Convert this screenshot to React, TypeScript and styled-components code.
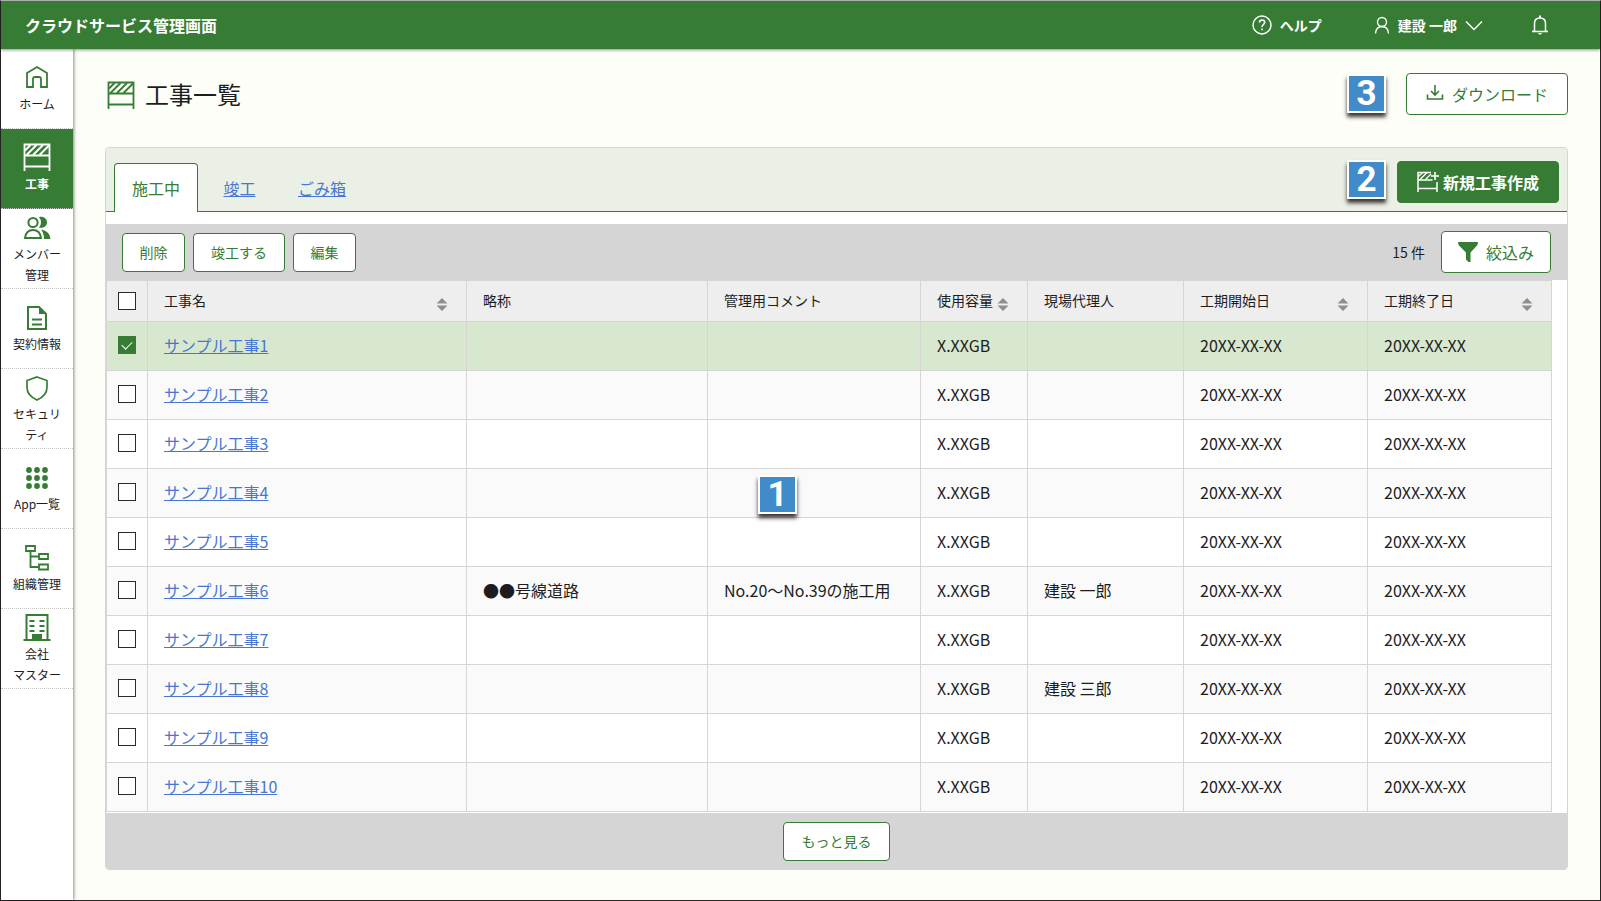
import React from 'react';
import styled, { createGlobalStyle, css } from 'styled-components';

const green = '#377c35';
const line = '#d5d5d5';
const linkBlue = '#4876d0';
const ink = '#1d1d1f';

const GlobalStyle = createGlobalStyle`
  *, *::before, *::after { box-sizing: border-box; }
  body {
    margin: 0;
    color: ${ink};
    font-family: "Noto Sans CJK JP", "Noto Sans", sans-serif;
    font-size: 16px;
    line-height: 24px;
  }
  button, input { font: inherit; color: inherit; }
`;

const Page = styled.div`
  display: flex;
  flex-direction: column;
  min-height: 100vh;
  background: #fdfef7;
  border: 1px solid #2a2527;
  border-top-color: #bdbdbd;
`;

const Header = styled.header`
  position: relative;
  z-index: 2;
  display: flex;
  align-items: center;
  justify-content: space-between;
  height: 48px;
  padding: 0 51px 0 24px;
  background: ${green};
  color: #fff;
  box-shadow: 0 1px 3px rgba(0, 0, 0, 0.45);
`;

const ServiceName = styled.div`
  font-weight: 700;
`;

const HeaderActions = styled.div`
  display: flex;
  align-items: center;
  gap: 48px;
`;

const HeaderButton = styled.button`
  display: flex;
  align-items: center;
  gap: 8px;
  padding: 0;
  border: 0;
  background: none;
  font-size: 14px;
  font-weight: 700;
  cursor: pointer;
  &:first-child { margin-right: 4px; }
`;

const Body = styled.div`
  display: flex;
  flex: 1;
`;

const Sidebar = styled.nav`
  position: relative;
  z-index: 1;
  flex: none;
  width: 72px;
  background: #fff;
  box-shadow: 1px 0 3px rgba(0, 0, 0, 0.45);
`;

const NavItem = styled.a<{ $active?: boolean }>`
  display: flex;
  flex-direction: column;
  align-items: center;
  justify-content: center;
  gap: 2px;
  height: 80px;
  border-bottom: 1px dotted #c4c4c4;
  color: ${ink};
  font-size: 12px;
  line-height: 21px;
  text-align: center;
  text-decoration: none;
  white-space: pre;
  svg { color: ${green}; }
  ${(p) =>
    p.$active &&
    css`
      background: ${green};
      color: #fff;
      font-weight: 700;
      svg { color: #fff; }
    `}
`;

const Main = styled.main`
  flex: 1;
  min-width: 0;
  padding: 24px 32px 30px;
`;

const TitleRow = styled.div`
  display: flex;
  align-items: center;
  justify-content: space-between;
  margin-bottom: 32px;
`;

const Title = styled.h1`
  display: flex;
  align-items: center;
  gap: 10px;
  margin: 0;
  padding-left: 2px;
  font-size: 24px;
  font-weight: 400;
  line-height: 36px;
  svg { color: ${green}; margin-top: 2px; }
`;

const ActionGroup = styled.div<{ $gap: number }>`
  display: flex;
  align-items: center;
  gap: ${(p) => p.$gap}px;
`;

const Button = styled.button<{ $kind?: 'primary' | 'small'; $width?: number }>`
  display: flex;
  align-items: center;
  justify-content: center;
  gap: 8px;
  height: 42px;
  min-width: ${(p) => p.$width ?? 0}px;
  padding: 0 16px;
  border: 1px solid ${green};
  border-radius: 4px;
  background: #fff;
  color: ${green};
  white-space: nowrap;
  cursor: pointer;
  ${(p) => p.$kind === 'small' && css`height: 39px; font-size: 14px;`}
  ${(p) => p.$kind === 'primary' && css`gap: 4px; background: ${green}; color: #fff; font-weight: 700;`}
`;

const Marker = styled.span`
  display: flex;
  align-items: center;
  justify-content: center;
  width: 39px;
  height: 39px;
  margin-bottom: 2px;
  border: 2px solid #fff;
  background: #418bcb;
  box-shadow: 0 4px 4px rgba(30, 20, 20, 0.85);
  color: #fff;
  font-family: Roboto, "Liberation Sans", sans-serif;
  font-size: 35px;
  font-weight: 700;
  line-height: 35px;
`;

const FloatingMarker = styled(Marker)`
  position: absolute;
  top: 195px;
  left: 652px;
`;

const Panel = styled.section`
  border: 1px solid ${line};
  border-radius: 4px;
  background: #fff;
  overflow: hidden;
`;

const TabBar = styled.div`
  display: flex;
  align-items: flex-end;
  justify-content: space-between;
  height: 64px;
  padding: 0 8px;
  background: #eaf0e6;
  box-shadow: inset 0 -1px ${green};
`;

const Tabs = styled.div`
  display: flex;
  gap: 8px;
`;

const Tab = styled.a<{ $active?: boolean }>`
  display: flex;
  align-items: center;
  justify-content: center;
  height: 49px;
  min-width: ${(p) => (p.$active ? 84 : 67)}px;
  padding: 0 16px;
  border: 1px solid transparent;
  border-bottom: 0;
  border-radius: 4px 4px 0 0;
  color: ${linkBlue};
  ${(p) =>
    p.$active &&
    css`
      border-color: ${green};
      background: #fff;
      color: ${green};
      text-decoration: none;
    `}
`;

const CreateArea = styled(ActionGroup)`
  align-items: flex-start;
  padding-bottom: 9px;
  ${Marker} { margin-top: -1px; }
`;

const Toolbar = styled.div`
  display: flex;
  align-items: center;
  justify-content: space-between;
  height: 56px;
  margin-top: 12px;
  padding: 0 16px;
  background: ${line};
`;

const Count = styled.span`
  font-size: 14px;
`;

const TableArea = styled.div`
  position: relative;
  padding: 0 15px 1px 0;
  overflow-x: auto;
`;

const Table = styled.table`
  width: 100%;
  min-width: 1280px;
  table-layout: fixed;
  border-collapse: separate;
  border-spacing: 0;
  border-top: 1px solid ${line};
  border-left: 1px solid ${line};
`;

const HeadCell = styled.th`
  height: 41px;
  padding: 0 16px 2px;
  border-right: 1px solid ${line};
  border-bottom: 1px solid ${line};
  background: #eee;
  font-size: 14px;
  font-weight: 400;
  line-height: 22px;
  text-align: left;
  white-space: nowrap;
`;

const Cell = styled.td`
  height: 49px;
  padding: 0 16px 2px;
  border-right: 1px solid ${line};
  border-bottom: 1px solid ${line};
  white-space: nowrap;
`;

const CheckCell = styled(Cell)`
  padding: 0 0 2px;
`;

const CheckHeadCell = styled(HeadCell)`
  padding: 0;
`;

const Row = styled.tr<{ $selected?: boolean }>`
  background: #fff;
  &:nth-child(even) { background: #fafafa; }
  ${(p) => p.$selected && css`background: #d7e8ce;`}
`;

const SortButton = styled.button`
  display: flex;
  align-items: center;
  justify-content: space-between;
  width: 100%;
  padding: 0;
  border: 0;
  background: none;
  cursor: pointer;
`;

const Checkbox = styled.input`
  display: block;
  width: 18px;
  height: 18px;
  margin: 0 auto;
  border: 1px solid #2a2a2a;
  background: #fff;
  appearance: none;
  &:checked {
    display: grid;
    place-items: center;
    border-color: ${green};
    background: ${green};
  }
  &:checked::before {
    content: "";
    width: 10px;
    height: 6px;
    margin-bottom: 3px;
    border: solid #fff;
    border-width: 0 0 1px 1px;
    transform: rotate(-45deg);
  }
`;

const Link = styled.a`
  color: ${linkBlue};
`;

const PanelFooter = styled.div`
  display: flex;
  align-items: center;
  justify-content: center;
  height: 56px;
  background: ${line};
`;

const FenceIcon = () => (
  <svg width="28" height="28" viewBox="0 0 28 28" fill="none" stroke="currentColor" aria-hidden="true">
    <path d="M1.5 28V1.5h25V28M1.5 12.500h25M1.5 23.500h25" strokeWidth="1.8" />
    <path d="M2 7.500l5.500-5.500M3.500 12L13.500 2M10 12L20 2M16.500 12l9.500-9.500" strokeWidth="1.900" />
  </svg>
);

const FencePlusIcon = () => (
  <svg width="22" height="22" viewBox="0 0 22 22" fill="none" stroke="currentColor" aria-hidden="true">
    <path d="M14 1.500H1V21M1 9h14.500M20 11v10M1 17.500h19" strokeWidth="1.500" />
    <path d="M1.500 5.500l4-4M2.500 9L10 1.500M8 9l6-6" strokeWidth="1.400" />
    <path d="M18 1v8M14 5h8" strokeWidth="1.600" />
  </svg>
);

const HomeIcon = () => (
  <svg width="28" height="28" viewBox="0 0 28 28" fill="none" stroke="currentColor" strokeWidth="1.800" aria-hidden="true">
    <path d="M4 24V10L14 4l10 6v14h-6v-8q0-2-2-2h-4q-2 0-2 2v8z" />
  </svg>
);

const MembersIcon = () => (
  <svg width="28" height="28" viewBox="0 0 28 28" aria-hidden="true">
    <g fill="none" stroke="currentColor" strokeWidth="2">
      <circle cx="10" cy="9.500" r="4.600" />
      <path d="M2 25q1-8 8-8t8 8z" />
    </g>
    <path d="M16 4c5-1 8 2 8 5.500S20.500 15.500 16 14.600Q18 12.500 18 9.500T16 4zM18 16.500c6 1 9 4.500 9.500 9.500H21c0-4-1-7-3-9.500z" fill="currentColor" />
  </svg>
);

const DocumentIcon = () => (
  <svg width="28" height="28" viewBox="0 0 28 28" fill="none" stroke="currentColor" strokeWidth="2" aria-hidden="true">
    <path d="M5 4h11l7 7v15H5z" />
    <path d="M16 4v7h7z" fill="currentColor" stroke="none" />
    <path d="M9 16.500h10M9 21.500h10" />
  </svg>
);

const ShieldIcon = () => (
  <svg width="28" height="28" viewBox="0 0 28 28" fill="none" stroke="currentColor" strokeWidth="1.700" aria-hidden="true">
    <path d="M14 4L24 7.500v7q0 8-10 12.500Q4 22.500 4 14.500V7.500z" />
  </svg>
);

const AppsIcon = () => (
  <svg width="28" height="28" viewBox="0 0 28 28" fill="currentColor" aria-hidden="true">
    {[7, 15, 23].flatMap((y) => [6, 14, 22].map((x) => <circle key={`${x}-${y}`} cx={x} cy={y} r="2.900" />))}
  </svg>
);

const TreeIcon = () => (
  <svg width="28" height="28" viewBox="0 0 28 28" fill="none" stroke="currentColor" strokeWidth="1.800" aria-hidden="true">
    <path d="M3 3h9v5H3zM16 11h9v5h-9zM16 21.500h9v5h-9zM7.500 8V24H16M7.500 13.500H16" />
  </svg>
);

const BuildingIcon = () => (
  <svg width="28" height="28" viewBox="0 0 28 28" fill="none" stroke="currentColor" strokeWidth="2" aria-hidden="true">
    <path d="M3.500 26V2h21v24M.500 27h27" />
    <path d="M6.500 8h5M16.500 8h5M6.500 13h5M16.500 13h5M6.500 18h5M16.500 18h5" />
    <path d="M9 21h10v5H9z" fill="currentColor" stroke="none" />
  </svg>
);

const HelpIcon = () => (
  <svg width="20" height="20" viewBox="0 0 20 20" fill="none" stroke="currentColor" strokeWidth="1.400" aria-hidden="true">
    <circle cx="10" cy="10" r="9" />
    <path d="M7.500 7.500c0-3.400 5.200-3.200 5.200-.2 0 2.200-2.700 2.200-2.700 4.700M10 13.500v1.700" strokeWidth="1.600" />
  </svg>
);

const UserIcon = () => (
  <svg width="16" height="18" viewBox="0 0 16 18" fill="none" stroke="currentColor" strokeWidth="1.400" aria-hidden="true">
    <circle cx="8" cy="6" r="4.500" />
    <path d="M1.500 17.500q.500-7 6.500-7t6.500 7" />
  </svg>
);

const ChevronIcon = () => (
  <svg width="18" height="12" viewBox="0 0 18 12" fill="none" stroke="currentColor" strokeWidth="1.400" aria-hidden="true">
    <path d="M1 2.500l8 8 8-8" />
  </svg>
);

const BellIcon = () => (
  <svg width="18" height="20" viewBox="0 0 18 20" aria-hidden="true">
    <path d="M1 16.500h16M3.500 16V8.500q0-5.500 5.500-5.500t5.500 5.500V16" fill="none" stroke="currentColor" strokeWidth="1.500" />
    <path d="M8 .500h2V3H8zM7 18h4q-.500 1.500-2 1.500T7 18z" fill="currentColor" />
  </svg>
);

const DownloadIcon = () => (
  <svg width="18" height="18" viewBox="0 0 18 18" fill="none" stroke="currentColor" strokeWidth="1.600" aria-hidden="true">
    <path d="M9 0v9.500M5 6l4 4 4-4M1.500 9.500V14h15V9.500" />
  </svg>
);

const FilterIcon = () => (
  <svg width="20" height="20" viewBox="0 0 20 20" fill="currentColor" aria-hidden="true">
    <path d="M0 0h20q0 2.500-1 3.500l-6.500 7V20h-2L8 17.500v-7L1 3.500Q0 2.500 0 0z" />
  </svg>
);

const SortIcon = () => (
  <svg width="16" height="22" viewBox="0 0 16 22" fill="#8f8f8f" aria-hidden="true">
    <path d="M8 9l5.500 5.500h-11zM2.500 16.500h11L8 22z" />
  </svg>
);

const navItems = [
  { label: 'ホーム', Icon: HomeIcon },
  { label: '工事', Icon: FenceIcon, active: true },
  { label: 'メンバー\n管理', Icon: MembersIcon },
  { label: '契約情報', Icon: DocumentIcon },
  { label: 'セキュリ\nティ', Icon: ShieldIcon },
  { label: 'App一覧', Icon: AppsIcon },
  { label: '組織管理', Icon: TreeIcon },
  { label: '会社\nマスター', Icon: BuildingIcon },
];

const columns: { label: string; width?: number; sortable?: boolean }[] = [
  { label: '工事名', sortable: true },
  { label: '略称', width: 241 },
  { label: '管理用コメント', width: 213 },
  { label: '使用容量', width: 107, sortable: true },
  { label: '現場代理人', width: 156 },
  { label: '工期開始日', width: 184, sortable: true },
  { label: '工期終了日', width: 184, sortable: true },
];

const details: Record<number, { short?: string; comment?: string; agent?: string }> = {
  6: { short: '●●号線道路', comment: 'No.20〜No.39の施工用', agent: '建設 一郎' },
  8: { agent: '建設 三郎' },
};

const rows = Array.from({ length: 10 }, (_, i) => ({
  id: i + 1,
  name: `サンプル工事${i + 1}`,
  size: 'X.XXGB',
  start: '20XX-XX-XX',
  end: '20XX-XX-XX',
  ...details[i + 1],
}));

export default function App() {
  const [selected, setSelected] = React.useState<number[]>([1]);
  const toggle = (id: number) =>
    setSelected((s) => (s.includes(id) ? s.filter((x) => x !== id) : [...s, id]));
  const allSelected = selected.length === rows.length;

  return (
    <>
      <GlobalStyle />
      <Page lang="ja">
        <Header>
          <ServiceName>クラウドサービス管理画面</ServiceName>
          <HeaderActions>
            <HeaderButton type="button"><HelpIcon />ヘルプ</HeaderButton>
            <HeaderButton type="button"><UserIcon />建設 一郎<ChevronIcon /></HeaderButton>
            <HeaderButton type="button" aria-label="通知"><BellIcon /></HeaderButton>
          </HeaderActions>
        </Header>
        <Body>
          <Sidebar>
            {navItems.map(({ label, Icon, active }) => (
              <NavItem key={label} href="#" $active={active}>
                <Icon />
                <span>{label}</span>
              </NavItem>
            ))}
          </Sidebar>
          <Main>
            <TitleRow>
              <Title><FenceIcon />工事一覧</Title>
              <ActionGroup $gap={20}>
                <Marker>3</Marker>
                <Button type="button" $width={162}><DownloadIcon />ダウンロード</Button>
              </ActionGroup>
            </TitleRow>
            <Panel>
              <TabBar>
                <Tabs>
                  <Tab href="#" $active>施工中</Tab>
                  <Tab href="#">竣工</Tab>
                  <Tab href="#">ごみ箱</Tab>
                </Tabs>
                <CreateArea $gap={11}>
                  <Marker>2</Marker>
                  <Button type="button" $kind="primary" $width={162}><FencePlusIcon />新規工事作成</Button>
                </CreateArea>
              </TabBar>
              <Toolbar>
                <ActionGroup $gap={8}>
                  <Button type="button" $kind="small" $width={63}>削除</Button>
                  <Button type="button" $kind="small" $width={92}>竣工する</Button>
                  <Button type="button" $kind="small" $width={63}>編集</Button>
                </ActionGroup>
                <ActionGroup $gap={16}>
                  <Count>15 件</Count>
                  <Button type="button" $width={110}><FilterIcon />絞込み</Button>
                </ActionGroup>
              </Toolbar>
              <TableArea>
                <Table>
                  <colgroup>
                    <col width={41} />
                    {columns.map((c) => <col key={c.label} width={c.width} />)}
                  </colgroup>
                  <thead>
                    <tr>
                      <CheckHeadCell>
                        <Checkbox
                          type="checkbox"
                          aria-label="すべて選択"
                          checked={allSelected}
                          onChange={() => setSelected(allSelected ? [] : rows.map((r) => r.id))}
                        />
                      </CheckHeadCell>
                      {columns.map((c) => (
                        <HeadCell key={c.label} scope="col">
                          {c.sortable ? <SortButton type="button">{c.label}<SortIcon /></SortButton> : c.label}
                        </HeadCell>
                      ))}
                    </tr>
                  </thead>
                  <tbody>
                    {rows.map((r) => (
                      <Row key={r.id} $selected={selected.includes(r.id)}>
                        <CheckCell>
                          <Checkbox
                            type="checkbox"
                            aria-label={r.name}
                            checked={selected.includes(r.id)}
                            onChange={() => toggle(r.id)}
                          />
                        </CheckCell>
                        <Cell><Link href="#">{r.name}</Link></Cell>
                        <Cell>{r.short}</Cell>
                        <Cell>{r.comment}</Cell>
                        <Cell>{r.size}</Cell>
                        <Cell>{r.agent}</Cell>
                        <Cell>{r.start}</Cell>
                        <Cell>{r.end}</Cell>
                      </Row>
                    ))}
                  </tbody>
                </Table>
                <FloatingMarker>1</FloatingMarker>
              </TableArea>
              <PanelFooter>
                <Button type="button" $kind="small" $width={107}>もっと見る</Button>
              </PanelFooter>
            </Panel>
          </Main>
        </Body>
      </Page>
    </>
  );
}
